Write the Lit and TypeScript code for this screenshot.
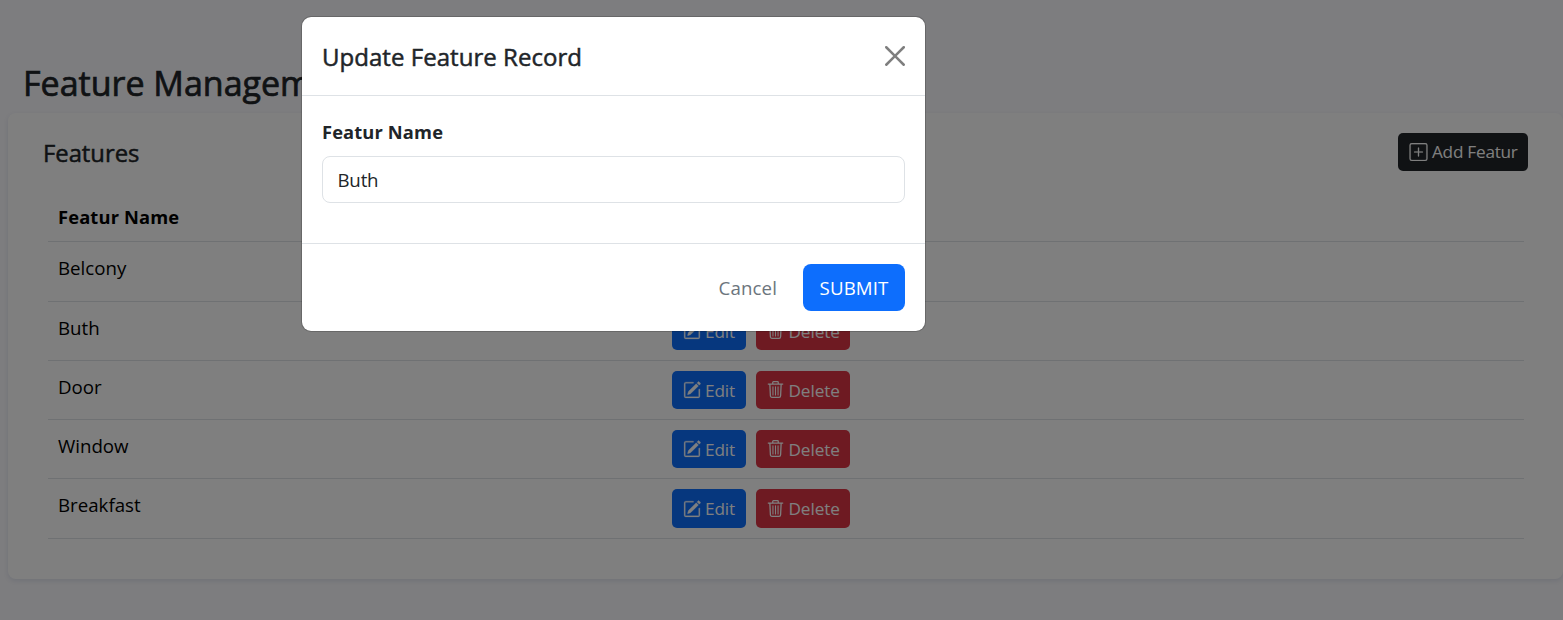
import { LitElement, html, css, svg } from "lit";
import { customElement, property, state } from "lit/decorators.js";

const ICONS = {
  edit: svg`<g stroke="currentColor" stroke-width=".25"><path d="M15.502 1.94a.5.5 0 0 1 0 .706L14.459 3.69l-2-2L13.502.646a.5.5 0 0 1 .707 0l1.293 1.293zm-1.75 2.456-2-2L4.939 9.21a.5.5 0 0 0-.121.196l-.805 2.414a.25.25 0 0 0 .316.316l2.414-.805a.5.5 0 0 0 .196-.12l6.813-6.814z"/><path fill-rule="evenodd" d="M1 13.5A1.5 1.5 0 0 0 2.5 15h11a1.5 1.5 0 0 0 1.5-1.5v-6a.5.5 0 0 0-1 0v6a.5.5 0 0 1-.5.5h-11a.5.5 0 0 1-.5-.5v-11a.5.5 0 0 1 .5-.5H9a.5.5 0 0 0 0-1H2.5A1.5 1.5 0 0 0 1 2.5v11z"/></g>`,
  trash: svg`<g fill="none" stroke="currentColor" stroke-width="1.2" stroke-linecap="round" stroke-linejoin="round"><path d="M1.2 2.9h13.6M5.4 2.7V1.3a.7.7 0 0 1 .7-.7h3.8a.7.7 0 0 1 .7.7v1.4M2.7 3.2l.5 10.7a1.5 1.5 0 0 0 1.5 1.5h6.6a1.5 1.5 0 0 0 1.5-1.5l.5-10.7"/><path stroke-width="1" d="M5.6 5.5v7.6M8 5.5v7.6M10.4 5.5v7.6"/></g>`,
  plus: svg`<g stroke="currentColor" stroke-width=".2"><path d="M14 1a1 1 0 0 1 1 1v12a1 1 0 0 1-1 1H2a1 1 0 0 1-1-1V2a1 1 0 0 1 1-1h12zM2 0a2 2 0 0 0-2 2v12a2 2 0 0 0 2 2h12a2 2 0 0 0 2-2V2a2 2 0 0 0-2-2H2z"/><path d="M8 4a.5.5 0 0 1 .5.5v3h3a.5.5 0 0 1 0 1h-3v3a.5.5 0 0 1-1 0v-3h-3a.5.5 0 0 1 0-1h3v-3A.5.5 0 0 1 8 4z"/></g>`,
  close: svg`<path d="M.293.293a1 1 0 0 1 1.414 0L8 6.586 14.293.293a1 1 0 1 1 1.414 1.414L9.414 8l6.293 6.293a1 1 0 0 1-1.414 1.414L8 9.414l-6.293 6.293a1 1 0 0 1-1.414-1.414L6.586 8 .293 1.707a1 1 0 0 1 0-1.414z"/>`,
};

@customElement("bi-icon")
class BiIcon extends LitElement {
  @property() name: keyof typeof ICONS = "edit";
  static styles = css`
    :host { display: inline-flex; flex: none; width: 18px; height: 18px; }
    svg { width: 100%; height: 100%; fill: currentColor; display: block; }
  `;
  render() {
    return html`<svg viewBox="0 0 16 16" aria-hidden="true">${ICONS[this.name]}</svg>`;
  }
}

@customElement("feature-modal")
class FeatureModal extends LitElement {
  @property() value = "";
  static styles = css`
    :host {
      display: block; box-sizing: border-box; width: 625px; height: 316px;
      background: #fff; background-clip: padding-box;
      border: 1px solid rgba(0, 0, 0, 0.175); border-radius: 10px; color: #212529;
    }
    * { box-sizing: border-box; }
    .header {
      display: flex; align-items: center; justify-content: space-between;
      height: 79px; padding: 0 20px; border-bottom: 1px solid #dee2e6;
    }
    .title { margin: 0; font-size: 24px; line-height: 38px; font-weight: 500; letter-spacing: 0.04px; padding-top: 2px; -webkit-text-stroke: 0.5px; }
    .close { display: flex; padding: 0; border: 0; background: none; color: #000; opacity: 0.5; }
    .close bi-icon { width: 20px; height: 20px; }
    .body { height: 148px; padding: 20px; border-bottom: 1px solid #dee2e6; }
    .label { display: block; height: 40px; line-height: 32px; font-weight: 700; font-size: 18.3px; letter-spacing: 0.14px; }
    .field {
      display: block; width: 100%; height: 47px; padding: 0 14.5px 1px; font: inherit; color: inherit;
      border: 1px solid #dee2e6; border-radius: 8px; background: #fff; outline: 0;
      letter-spacing: -0.2px;
    }
    .footer { display: flex; justify-content: flex-end; gap: 10px; padding: 20px; }
    .btn {
      height: 47px; border: 0; border-radius: 8px; font: inherit; letter-spacing: 0.1px; padding: 1px 16px 0;
      background: none; color: #6c757d; white-space: nowrap;
    }
    .btn.primary { width: 102px; background: #0d6efd; color: #fff; padding-inline: 0; }
  `;
  render() {
    return html`
      <div class="header">
        <h5 class="title">Update Feature Record</h5>
        <button class="close" aria-label="Close"><bi-icon name="close"></bi-icon></button>
      </div>
      <div class="body">
        <label class="label">Featur Name</label>
        <input class="field" .value=${this.value} />
      </div>
      <div class="footer">
        <button class="btn">Cancel</button>
        <button class="btn primary">SUBMIT</button>
      </div>
    `;
  }
}

@customElement("app-root")
class AppRoot extends LitElement {
  @state() features = ["Belcony", "Buth", "Door", "Window", "Breakfast"];
  static styles = css`
    :host {
      display: block; position: relative; box-sizing: border-box; height: 620px; overflow: hidden;
      padding-left: 8px; background: #fafafe; color: #212529;
      font: 400 18.7px/30px "Open Sans", "Noto Sans", sans-serif;
    }
    * { box-sizing: border-box; }
    .page-title { margin: 0; height: 113px; padding: 60px 0 0 15px; font-size: 34px; line-height: 46px; font-weight: 500; -webkit-text-stroke: 0.7px; }
    .card { height: 466px; padding: 20px 35px 0; background: #fff; border-radius: 8px; box-shadow: 0 2px 5px rgba(1, 41, 112, 0.1); }
    .card-head { display: flex; align-items: center; justify-content: space-between; height: 38px; }
    .card-title { margin: 0; font-size: 23.8px; font-weight: 500; padding-top: 1px; -webkit-text-stroke: 0.5px; }
    .table { margin: 20px 4px 0 5px; color: #000; }
    .row { display: grid; grid-template-columns: 624px 1fr; height: 59px; padding-top: 10px; border-bottom: 1px solid #dee2e6; }
    .row > span { padding: 1px 10px 0; }
    .row:nth-child(2), .row:last-child { height: 60px; }
    .row.head { height: 51px; font-weight: 700; font-size: 18.3px; letter-spacing: 0.16px; }
    .actions { display: flex; gap: 10px; }
    .btn {
      display: inline-flex; align-items: center; gap: 4px; height: 38px; padding: 0 0 0 11px;
      border: 0; border-radius: 5px; color: #fff; font: inherit; font-size: 17.2px; white-space: nowrap;
    }
    .row:last-child .btn { height: 39px; }
    .btn span { padding-top: 1px; letter-spacing: -0.1px; }
    .dark { width: 130px; background: #212529; }
    .dark bi-icon { width: 19px; height: 18px; margin-top: -1px; }
    .dark span { padding-top: 0; letter-spacing: -0.25px; }
    .edit { width: 74px; background: #0d6efd; }
    .delete { width: 94px; background: #dc3545; }
    .delete bi-icon { width: 17px; height: 17px; margin-top: -1px; }
    .delete span { padding-left: 0.5px; }
    .overlay {
      position: absolute; inset: 0; display: flex; align-items: flex-start; padding: 16px 0 0 301px;
      background: rgba(0, 0, 0, 0.5);
    }
  `;
  render() {
    return html`
      <h1 class="page-title">Feature Management</h1>
      <section class="card">
        <div class="card-head">
          <h5 class="card-title">Features</h5>
          <button class="btn dark"><bi-icon name="plus"></bi-icon><span>Add Featur</span></button>
        </div>
        <div class="table">
          <div class="row head"><span>Featur Name</span></div>
          ${this.features.map((name) => html`
            <div class="row">
              <span>${name}</span>
              <div class="actions">
                <button class="btn edit"><bi-icon name="edit"></bi-icon><span>Edit</span></button>
                <button class="btn delete"><bi-icon name="trash"></bi-icon><span>Delete</span></button>
              </div>
            </div>`)}
        </div>
      </section>
      <div class="overlay"><feature-modal .value=${"Buth"}></feature-modal></div>
    `;
  }
}
